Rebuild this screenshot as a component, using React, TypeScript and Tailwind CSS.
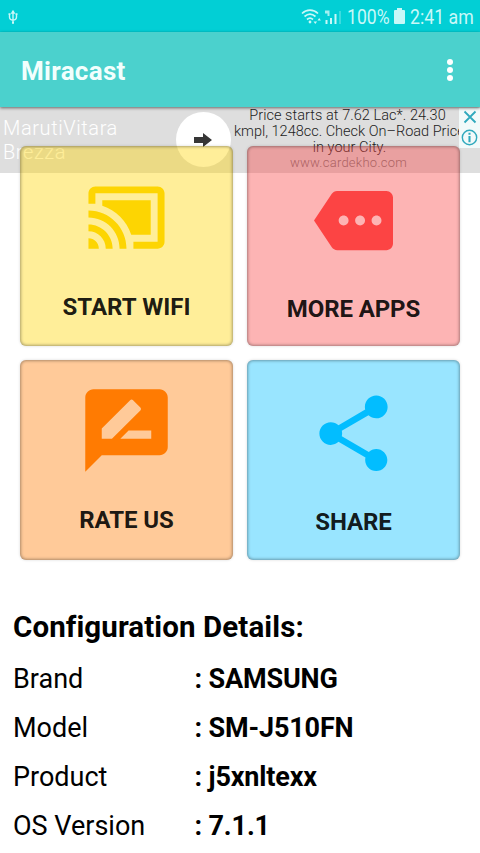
import React from "react";

type Tile = {
  label: string;
  card: string;
  icon: string;
  text: string;
  path: string;
};

const tiles: Tile[] = [
  {
    label: "START WIFI",
    card: "bg-[#ffd500]/40 pt-[30px] pb-[25px]",
    icon: "size-[83px] fill-[#fdd502]",
    text: "tracking-[.05px]",
    path: "M1 18v3h3c0-1.66-1.34-3-3-3zm0-4v2c2.76 0 5 2.24 5 5h2c0-3.87-3.13-7-7-7zm18-7H5v1.63c3.96 1.28 7.09 4.41 8.37 8.37H19V7zM1 10v2c4.97 0 9 4.03 9 9h2c0-6.08-4.93-11-11-11zm20-7H3c-1.1 0-2 .9-2 2v3h2V5h18v14h-7v2h7c1.1 0 2-.9 2-2V5c0-1.1-.9-2-2-2z",
  },
  {
    label: "MORE APPS",
    card: "bg-[#fb4444]/40 pt-[35px] pb-[23px]",
    icon: "size-[79px] fill-[#fc4444]",
    text: "tracking-[-.1px]",
    path: "M22 3H7c-.69 0-1.23.35-1.59.88L0 12l5.41 8.11c.36.53.97.89 1.66.89H22c1.1 0 2-.9 2-2V5c0-1.1-.9-2-2-2zM9 13.5c-.83 0-1.5-.67-1.5-1.5s.67-1.5 1.5-1.5 1.5.67 1.5 1.5-.67 1.5-1.5 1.5zm5 0c-.83 0-1.5-.67-1.5-1.5s.67-1.5 1.5-1.5 1.5.67 1.5 1.5-.67 1.5-1.5 1.5zm5 0c-.83 0-1.5-.67-1.5-1.5s.67-1.5 1.5-1.5 1.5.67 1.5 1.5-.67 1.5-1.5 1.5z",
  },
  {
    label: "RATE US",
    card: "bg-[#ff7b00]/40 pt-[21px] pb-[26px]",
    icon: "size-[99px] fill-[#ff7b02]",
    text: "tracking-[-.1px]",
    path: "M20 2H4c-1.1 0-1.99.9-1.99 2L2 22l4-4h14c1.1 0 2-.9 2-2V4c0-1.1-.9-2-2-2zM6 14v-2.47l6.88-6.88c.2-.2.51-.2.71 0l1.77 1.77c.2.2.2.51 0 .71L8.47 14H6zm12 0h-7.5l2-2H18v2z",
  },
  {
    label: "SHARE",
    card: "bg-[#00bfff]/40 pt-[28px] pb-[24px]",
    icon: "size-[91px] fill-[#02bdff]",
    text: "tracking-[-.1px]",
    path: "M18 16.08c-.76 0-1.44.3-1.96.77L8.91 12.7c.05-.23.09-.46.09-.7s-.04-.47-.09-.7l7.05-4.11c.54.5 1.25.81 2.04.81 1.66 0 3-1.34 3-3s-1.34-3-3-3-3 1.34-3 3c0 .24.04.47.09.7L8.04 9.81C7.5 9.31 6.79 9 6 9c-1.66 0-3 1.34-3 3s1.34 3 3 3c.79 0 1.5-.31 2.04-.81l7.12 4.16c-.05.21-.08.43-.08.65 0 1.61 1.31 2.92 2.92 2.92s2.92-1.31 2.92-2.92-1.31-2.92-2.92-2.92z",
  },
];

const details = [
  ["Brand", "SAMSUNG"],
  ["Model", "SM-J510FN"],
  ["Product", "j5xnltexx"],
  ["OS Version", "7.1.1"],
];

function StatusBar() {
  return (
    <div className="flex h-8 items-center bg-[#02cfd5] pr-[6px] pl-[7px] text-[#c9f8f8]">
      <svg viewBox="0 0 12 16" className="mt-px h-4 w-3 fill-none stroke-current stroke-[1.4]">
        <path d="M6 2v13M2.500 5v3c0 2 1.500 3 3.500 3s3.500-1 3.500-3V5" />
        <path d="M4.800 4L6 2l1.200 2z" />
        <path d="M1.500 5h2M8.500 5h2M5 13.500h2" />
      </svg>
      <svg viewBox="0 0 42 18" className="mt-px ml-auto h-[18px] w-[42px] fill-none stroke-current">
        <path d="M1 5.500C5.500 1 12.500 1 17 5.500M3.500 8.500c3.500-3 7.500-3 11 0M6 11.500c2-1.700 4-1.700 6 0" strokeWidth="1.700" />
        <circle cx="9" cy="14" r="1.400" className="fill-current stroke-none" />
        <path d="M12.500 13.500l1.800 2.500 1.800-2.500zM16.500 12.500l1.700-2.500 1.700 2.500z" className="fill-current stroke-none" />
        <path d="M24 2.500h4.500v5.500h-2V5.500H24z" className="fill-current stroke-none" opacity=".8" />
        <path d="M25.500 12v4M30 10v6M34.500 6v10" strokeWidth="2" />
        <path d="M39 3v13" strokeWidth="1.500" opacity=".4" />
      </svg>
      <span className="ml-[4px] w-[43px] text-[20px] leading-8 whitespace-nowrap">
        <span className="inline-block origin-left scale-x-[.88] pt-px">100%</span>
      </span>
      <svg viewBox="0 0 11 16" className="ml-[4px] h-4 w-[11px] fill-current">
        <path d="M3 0h5v2h2q1 0 1 1v12q0 1-1 1H1q-1 0-1-1V3q0-1 1-1h2z" />
      </svg>
      <span className="ml-[5px] w-[64px] text-[20px] leading-8 whitespace-nowrap">
        <span className="inline-block origin-left scale-x-[.885] pt-px">2:41 am</span>
      </span>
    </div>
  );
}

function Banner() {
  return (
    <div className="relative flex h-[66px] bg-[#dedede] font-light">
      <div className="w-[176px] pt-[9px] pl-[3px] text-[20px] leading-6 tracking-[.6px] text-white">
        MarutiVitara
        <br />
        Brezza
      </div>
      <div className="mt-[5px] flex size-[55px] shrink-0 items-center justify-center rounded-full bg-white pr-[2px]">
        <svg viewBox="0 0 18 14" className="h-[14px] w-[18px] fill-[#363636]">
          <path d="M0 4h9V0l9 7-9 7v-4H0z" />
        </svg>
      </div>
      <div className="ml-[3px] flex w-[227px] flex-col items-center pt-px text-[14.500px] leading-4 whitespace-nowrap text-[#1c1c1c]">
        <span className="tracking-[.05px]">Price starts at 7.62 Lac*. 24.30</span>
        <span className="self-start">kmpl, 1248cc. Check On–Road Price</span>
        <span className="ml-[4px] tracking-[.05px]">in your City.</span>
        <span className="ml-[2px] text-[13px] leading-[14px] tracking-[.25px] text-[#777]">www.cardekho.com</span>
      </div>
      <div className="absolute top-px right-0 flex h-10 w-[21px] flex-col items-center justify-around bg-[#f2fafa]">
        <svg viewBox="0 0 14 14" className="size-[14px] fill-none stroke-[#2fa9bd] stroke-[1.800]">
          <path d="M1.500 1.500l11 11M12.500 1.500l-11 11" />
        </svg>
        <svg viewBox="0 0 18 18" className="size-[17px] fill-none stroke-[#2fa9bd] stroke-[1.500]">
          <circle cx="9" cy="9" r="7.600" />
          <path d="M9 4v2M9 7.500V14" strokeWidth="2.200" />
        </svg>
      </div>
    </div>
  );
}

export default function App() {
  return (
    <div className="flex h-[853px] w-[480px] flex-col overflow-hidden bg-white font-['Roboto',sans-serif] text-black">
      <StatusBar />
      <header className="relative z-10 flex h-[75px] items-center justify-between bg-[#4bd1cd] pr-[27px] pl-[21px] shadow-[0_1px_3px_rgba(0,0,0,0.55)]">
        <h1 className="pt-[3px] text-[26px] font-bold tracking-[.3px] text-[#f2fffd]">Miracast</h1>
        <div className="flex flex-col gap-[2px]">
          <i className="size-[6px] rounded-full bg-white" />
          <i className="size-[6px] rounded-full bg-white" />
          <i className="size-[6px] rounded-full bg-white" />
        </div>
      </header>
      <Banner />
      <main className="relative -mt-[27px] grid grid-cols-2 gap-[14px] px-5">
        {tiles.map((t) => (
          <button
            key={t.label}
            className={`flex h-[200px] flex-col items-center justify-between rounded-[6px] shadow-[inset_0_0_3px_1px_rgba(0,0,0,0.32),0_0_3px_rgba(0,0,0,0.15)] ${t.card}`}
          >
            <svg viewBox="0 0 24 24" className={t.icon}>
              <path d={t.path} />
            </svg>
            <span className={`text-[24px] leading-7 font-bold text-black/90 ${t.text}`}>{t.label}</span>
          </button>
        ))}
      </main>
      <section className="mt-[49px] pl-[13px]">
        <h2 className="text-[29.500px] leading-9 font-bold tracking-[.1px] whitespace-nowrap">Configuration Details:</h2>
        <dl className="mt-[9.500px] grid grid-cols-[181.500px_1fr] text-[27px] leading-[49.300px]">
          {details.map(([name, value]) => (
            <React.Fragment key={name}>
              <dt>{name}</dt>
              <dd className="font-bold tracking-[-.15px]">: {value}</dd>
            </React.Fragment>
          ))}
        </dl>
      </section>
    </div>
  );
}
